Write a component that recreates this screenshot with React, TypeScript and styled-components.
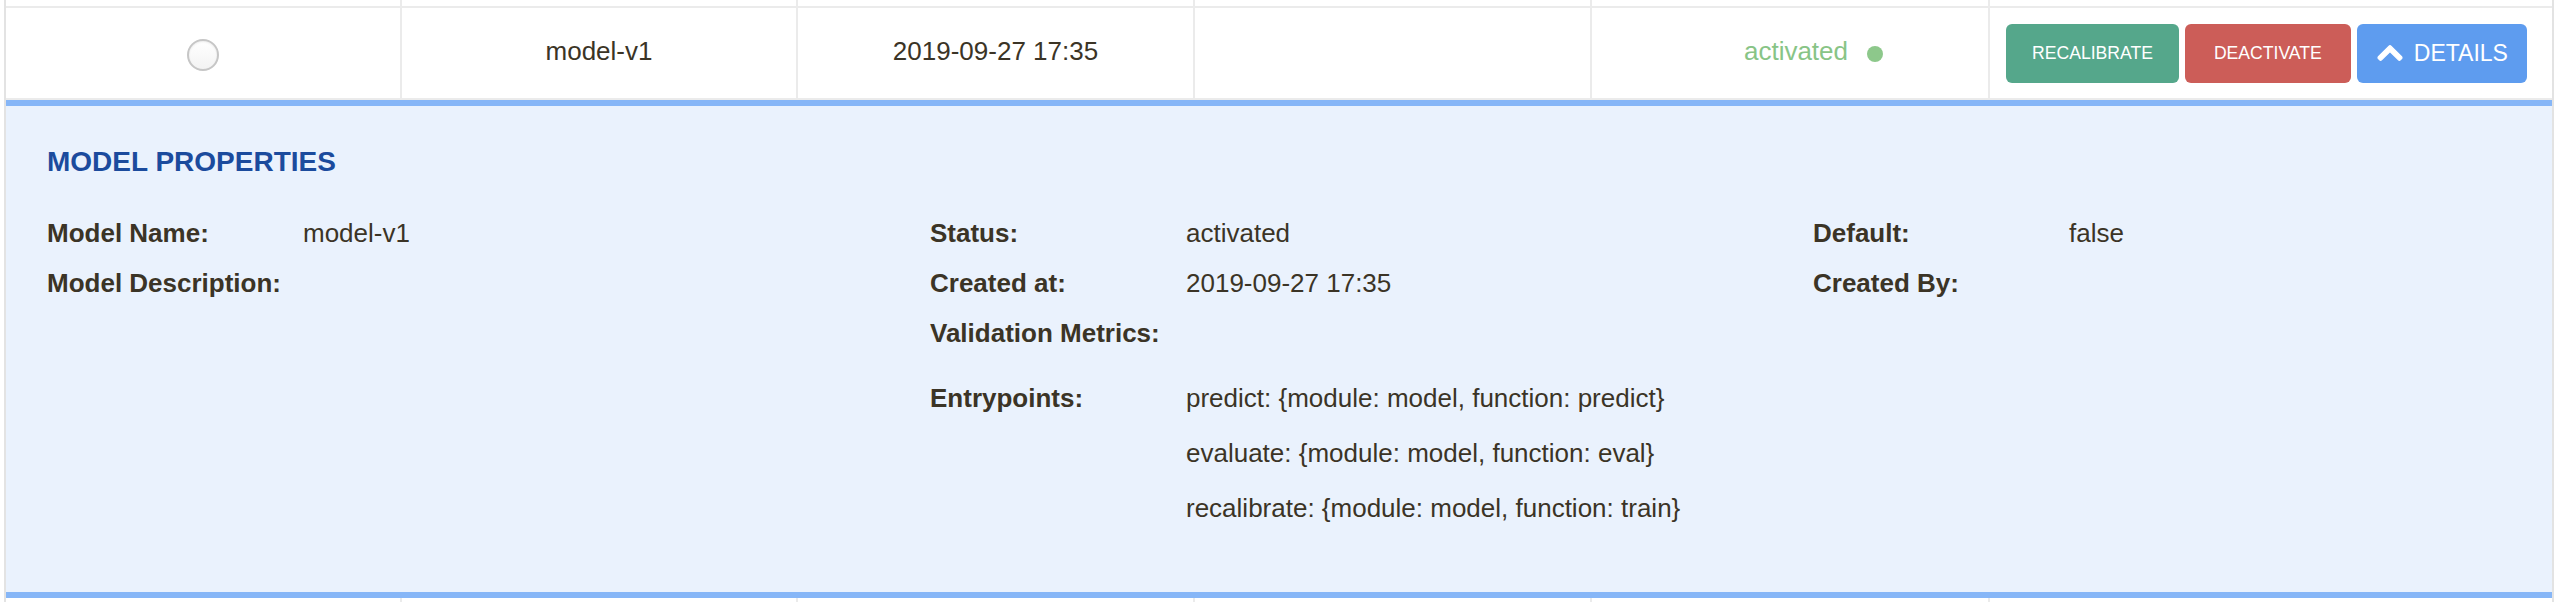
import styled, { createGlobalStyle } from "styled-components";
import { FaChevronUp } from "react-icons/fa";

const GlobalStyle = createGlobalStyle`
  html, body {
    margin: 0;
    padding: 0;
    background: #ffffff;
  }
  body {
    font-family: "Liberation Sans", Helvetica, Arial, sans-serif;
    color: #3b3426;
  }
`;

const Page = styled.div`
  width: 2556px;
  height: 602px;
  overflow: hidden;
  padding-left: 4px;
  box-sizing: border-box;
`;

const Table = styled.div`
  width: 2550px;
  border-left: 2px solid #e3e3e3;
  border-right: 2px solid #e3e3e3;
  box-sizing: border-box;
`;

const Row = styled.div<{ $h: number; $lined?: boolean }>`
  display: grid;
  grid-template-columns: 396px 396px 397px 397px 398px 1fr;
  height: ${(p) => p.$h}px;
  box-sizing: content-box;
  border-top: ${(p) => (p.$lined ? "2px solid #ebebeb" : "none")};
  border-bottom: ${(p) => (p.$lined ? "2px solid #ebebeb" : "none")};
  background: #ffffff;
`;

const Cell = styled.div<{ $justify?: string; $padLeft?: number }>`
  display: flex;
  align-items: center;
  justify-content: ${(p) => p.$justify ?? "center"};
  padding-left: ${(p) => p.$padLeft ?? 0}px;
  padding-bottom: 3px;
  border-right: 2px solid #ebebeb;
  font-size: 26px;
  color: #3b3426;
  &:last-child {
    border-right: none;
  }
`;

const Radio = styled.span`
  width: 28px;
  height: 28px;
  margin-top: 6px;
  border-radius: 50%;
  border: 2px solid #c6c6c6;
  background: linear-gradient(#ffffff, #f3f3f3);
  box-shadow: inset 0 1px 2px rgba(0, 0, 0, 0.08);
`;

const StatusText = styled.span`
  color: #88c486;
`;

const StatusDot = styled.span`
  width: 16px;
  height: 16px;
  margin-left: 19px;
  margin-top: 4px;
  border-radius: 50%;
  background: #8dc88b;
`;

const Actions = styled.div`
  display: flex;
  align-items: center;
  gap: 6px;
  margin-top: 3px;
`;

const Button = styled.button<{ $bg: string; $pad: number; $size: number }>`
  display: flex;
  align-items: center;
  gap: 10px;
  height: 59px;
  padding: 0 ${(p) => p.$pad}px;
  border: none;
  border-radius: 6px;
  background: ${(p) => p.$bg};
  color: #ffffff;
  font-family: "Liberation Sans", Helvetica, Arial, sans-serif;
  font-size: ${(p) => p.$size}px;
  text-transform: uppercase;
  cursor: pointer;
  svg {
    stroke: currentColor;
    stroke-width: 24px;
  }
`;

const Panel = styled.div`
  border-top: 6px solid #86b6f7;
  border-bottom: 6px solid #86b6f7;
  background: #eaf2fd;
  padding: 40px 41px 56px;
`;

const Heading = styled.h3`
  margin: 0 0 30px;
  font-size: 28px;
  line-height: 32px;
  font-weight: bold;
  color: #1b4b9d;
`;

const PropGrid = styled.div`
  display: grid;
  grid-template-columns: 883px 883px 1fr;
  align-items: start;
`;

const PropCol = styled.div`
  display: flex;
  flex-direction: column;
`;

const PropRow = styled.div<{ $line?: number; $gap?: number }>`
  display: grid;
  grid-template-columns: 256px 1fr;
  font-size: 26px;
  line-height: ${(p) => p.$line ?? 50}px;
  margin-top: ${(p) => p.$gap ?? 0}px;
`;

const Label = styled.span`
  font-weight: bold;
`;

const Values = styled.div`
  display: flex;
  flex-direction: column;
`;

const props1 = [
  { label: "Model Name:", value: "model-v1" },
  { label: "Model Description:", value: "" },
];
const props2 = [
  { label: "Status:", value: "activated" },
  { label: "Created at:", value: "2019-09-27 17:35" },
  { label: "Validation Metrics:", value: "" },
];
const props3 = [
  { label: "Default:", value: "false" },
  { label: "Created By:", value: "" },
];
const entrypoints = [
  "predict: {module: model, function: predict}",
  "evaluate: {module: model, function: eval}",
  "recalibrate: {module: model, function: train}",
];

const StubRow = ({ h }: { h: number }) => (
  <Row $h={h}>
    {[0, 1, 2, 3, 4, 5].map((i) => (
      <Cell key={i} />
    ))}
  </Row>
);

const App = () => {
  return (
    <Page>
      <GlobalStyle />
      <Table>
        <StubRow h={6} />
        <Row $h={90} $lined>
          <Cell>
            <Radio />
          </Cell>
          <Cell>model-v1</Cell>
          <Cell>2019-09-27 17:35</Cell>
          <Cell />
          <Cell $padLeft={47}>
            <StatusText>activated</StatusText>
            <StatusDot />
          </Cell>
          <Cell $justify="flex-start" $padLeft={16}>
            <Actions>
              <Button $bg="#55a78b" $pad={26} $size={17.6}>
                Recalibrate
              </Button>
              <Button $bg="#cc5d58" $pad={29} $size={17.6}>
                Deactivate
              </Button>
              <Button $bg="#5e9cef" $pad={19} $size={23}>
                <FaChevronUp size={28} />
                Details
              </Button>
            </Actions>
          </Cell>
        </Row>
        <Panel>
          <Heading>MODEL PROPERTIES</Heading>
          <PropGrid>
            <PropCol>
              {props1.map((p) => (
                <PropRow key={p.label}>
                  <Label>{p.label}</Label>
                  <span>{p.value}</span>
                </PropRow>
              ))}
            </PropCol>
            <PropCol>
              {props2.map((p) => (
                <PropRow key={p.label}>
                  <Label>{p.label}</Label>
                  <span>{p.value}</span>
                </PropRow>
              ))}
              <PropRow $line={55} $gap={13}>
                <Label>Entrypoints:</Label>
                <Values>
                  {entrypoints.map((e) => (
                    <span key={e}>{e}</span>
                  ))}
                </Values>
              </PropRow>
            </PropCol>
            <PropCol>
              {props3.map((p) => (
                <PropRow key={p.label}>
                  <Label>{p.label}</Label>
                  <span>{p.value}</span>
                </PropRow>
              ))}
            </PropCol>
          </PropGrid>
        </Panel>
        <StubRow h={10} />
      </Table>
    </Page>
  );
};

export default App;
